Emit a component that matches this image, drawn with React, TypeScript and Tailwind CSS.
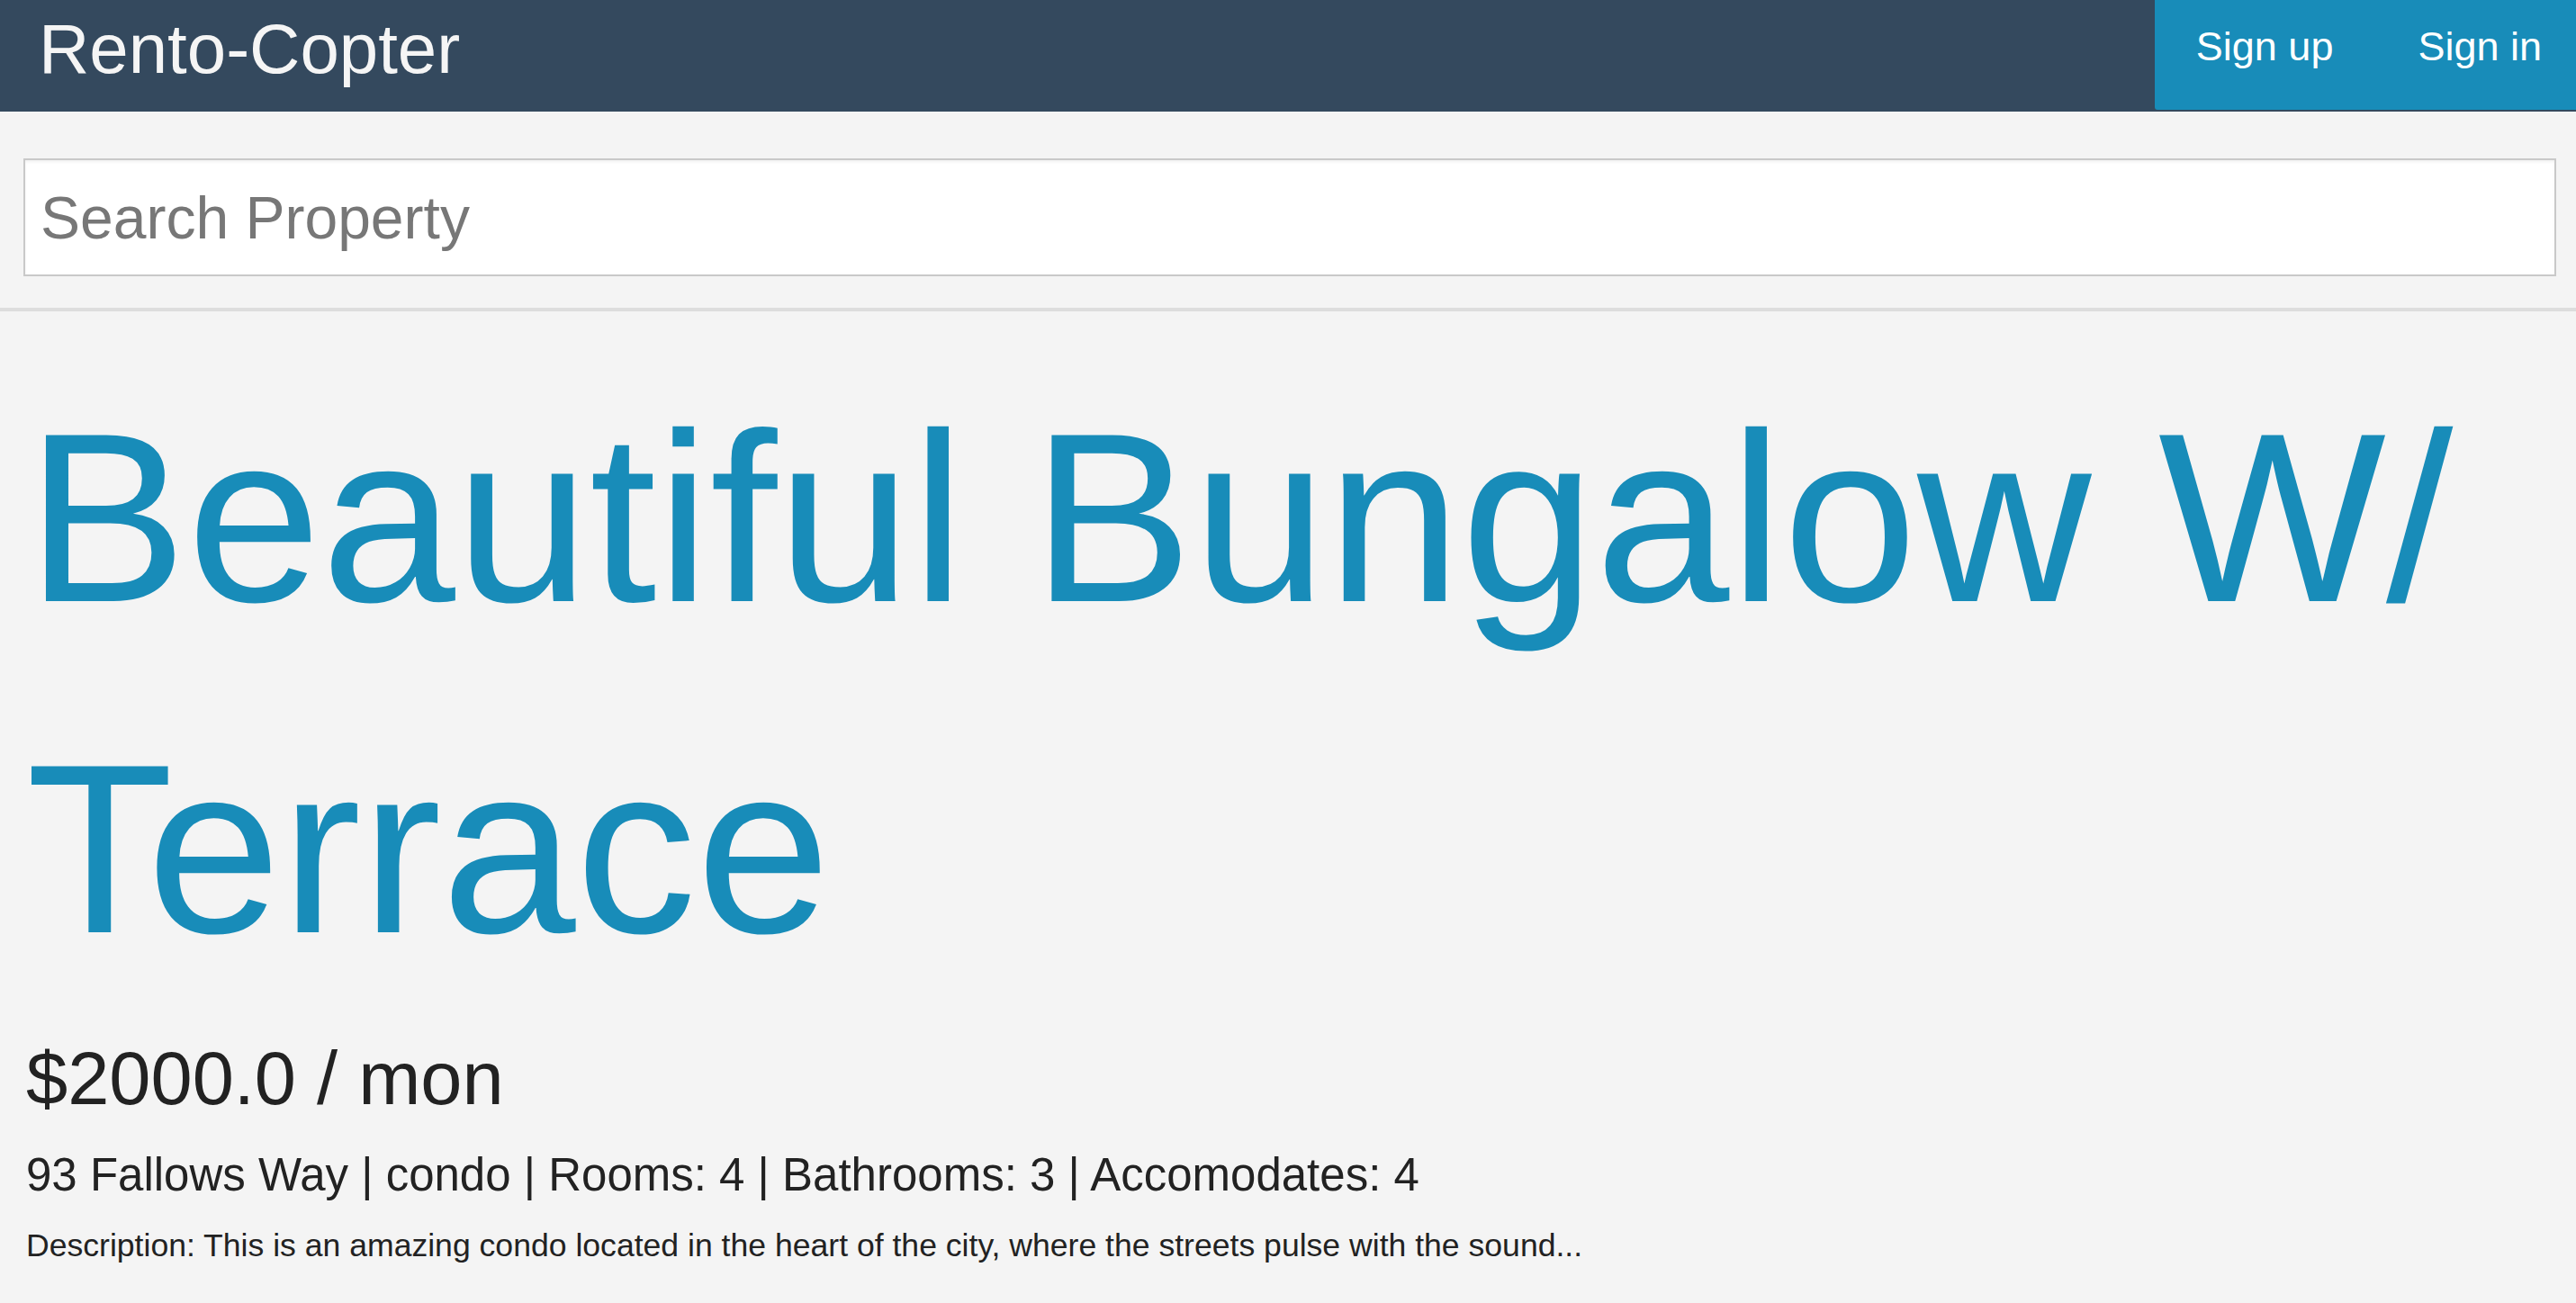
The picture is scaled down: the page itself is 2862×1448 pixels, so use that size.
import React, { useState } from 'react';

// ============================================================================
// Rento-Copter : property detail page
// ============================================================================

interface Property {
  title: string;
  price: string;
  address: string;
  kind: string;
  rooms: number;
  bathrooms: number;
  accomodates: number;
  description: string;
}

const property: Property = {
  title: 'Beautiful Bungalow W/ Terrace',
  price: '$2000.0 / mon',
  address: '93 Fallows Way',
  kind: 'condo',
  rooms: 4,
  bathrooms: 3,
  accomodates: 4,
  description:
    'Description: This is an amazing condo located in the heart of the city, where the streets pulse with the sound...'
};

export default function App() {
  const [query, setQuery] = useState('');

  return (
    <div className="min-h-screen bg-[#f4f4f4] font-['Liberation_Sans',Arial,sans-serif]">
      {/* Navbar */}
      <nav className="h-[124px] bg-[#34495e] flex justify-between items-start">
        <a href="#" className="pl-[43px] pt-[15px] text-[78px] leading-none text-[#f5f5f5]">
          Rento-Copter
        </a>
        <ul className="h-[122px] bg-[#188cb9] rounded-bl-[3px] flex">
          <li>
            <a href="#" className="block pl-[46px] pr-[46px] pt-[29px] text-[45px] leading-none text-white">
              Sign up
            </a>
          </li>
          <li>
            <a href="#" className="block pl-[48px] pr-[38px] pt-[29px] text-[45px] leading-none text-white">
              Sign in
            </a>
          </li>
        </ul>
      </nav>

      {/* Search */}
      <div className="pt-[52px] pb-[35px] pl-[26px] pr-[22px] border-b-4 border-[#dddddd]">
        <input
          type="text"
          value={query}
          onChange={(e) => setQuery(e.target.value)}
          placeholder="Search Property"
          className="w-full h-[131px] bg-white border-2 border-[#c9c9c9] shadow-[inset_0_2px_3px_rgba(0,0,0,0.06)] pl-[17px] text-[66px] text-[#555] placeholder:text-[#777] outline-none"
        />
      </div>

      {/* Property */}
      <div className="pl-[29px] pr-[22px] pb-[40px]">
        <h1 className="mt-[45px] text-[268px] leading-[368px] text-[#188cb9]">{property.title}</h1>
        <h3 className="mt-[23px] text-[83px] leading-[98px] text-[#222]">{property.price}</h3>
        <p className="mt-[21px] text-[51px] leading-[73px] text-[#222]">
          {property.address} | {property.kind} | Rooms: {property.rooms} | Bathrooms: {property.bathrooms} | Accomodates: {property.accomodates}
        </p>
        <p className="mt-[18px] text-[35.6px] leading-[48px] text-[#222]">{property.description}</p>
      </div>
    </div>
  );
}
